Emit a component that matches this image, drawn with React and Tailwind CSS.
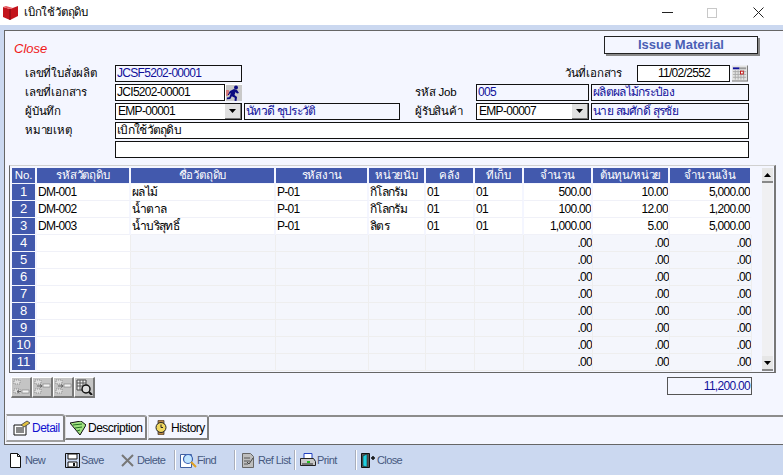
import React from "react";

const Label = ({ w, children }) => (
  <div className={`${w} text-[11.5px] leading-[17px] text-black shrink-0 tracking-[-0.2px]`}>{children}</div>
);

const Field = ({ w, blue, center, children }) => (
  <div className={`${w} h-[17px] shrink-0 border border-[#111] overflow-hidden whitespace-nowrap pl-[1px] text-[12px] leading-[15px] tracking-[-0.7px] ${blue ? "bg-[#f4f6ff] text-[#10109a]" : "bg-white text-black"} ${center ? "text-center" : ""}`}>
    {children}
  </div>
);

const Combo = ({ w, children }) => (
  <div className={`${w} h-[17px] shrink-0 border border-[#111] bg-white flex items-center text-[12px] leading-[15px] tracking-[-0.7px] text-black pl-[2px]`}>
    <span className="flex-1 overflow-hidden whitespace-nowrap">{children}</span>
    <span className="w-[16px] h-[15px] bg-[#e0e0e0] border-r border-b border-[#777] flex items-center justify-center">
      <svg width="7" height="4" viewBox="0 0 7 4"><path d="M0 0h7L3.5 4z" fill="#000" /></svg>
    </span>
  </div>
);

const Runner = () => (
  <svg width="17" height="17" viewBox="0 0 17 17">
    <rect width="17" height="17" fill="#c9c9c9" />
    <path d="M0 0h17v1H1v16H0z" fill="#fff" />
    <circle cx="11" cy="3.5" r="2" fill="#0b0b80" />
    <path d="M5 7l4-2 3 1 2 3-2 .5-1.500-1.500-1 3 2.500 2-.5 4-2-.2.3-3-3-1.500-1.500 2.700-3.500.2.3-1.700 2.200-.3 1.500-4-1 .4-1 1.700-1.200-.6z" fill="#0b0b80" />
    <path d="M1 7h3M1 9h3M1 11h2" stroke="#e03030" strokeWidth="1" />
  </svg>
);

const Calendar = () => (
  <svg width="16" height="17" viewBox="0 0 17 17" className="shrink-0">
    <rect width="17" height="17" fill="#e4e4e4" />
    <path d="M16 0h1v17H0v-1h16z" fill="#777" />
    <rect x="1" y="2" width="7" height="2" fill="#10109a" />
    <rect x="8" y="2" width="7" height="2" fill="#999" />
    <path d="M1 6.500h14M1 9.500h14M1 12.500h14M3.500 5v10M6.500 5v10M9.500 5v10M12.500 5v10" stroke="#aaa" strokeWidth="1" />
    <rect x="9" y="6" width="3" height="3" fill="#fff" stroke="#c01010" strokeWidth="1" />
  </svg>
);

const widths = ["w-[25px]", "w-[94px]", "w-[145px]", "w-[93px]", "w-[57px]", "w-[49px]", "w-[49px]", "w-[69px]", "w-[77px]", "w-[82px]"];
const heads = ["No.", "รหัสวัตถุดิบ", "ชื่อวัตถุดิบ", "รหัสงาน", "หน่วยนับ", "คลัง", "ที่เก็บ", "จำนวน", "ต้นทุน/หน่วย", "จำนวนเงิน"];
const data = [
  ["DM-001", "ผลไม้", "P-01", "กิโลกรัม", "01", "01", "500.00", "10.00", "5,000.00"],
  ["DM-002", "น้ำตาล", "P-01", "กิโลกรัม", "01", "01", "100.00", "12.00", "1,200.00"],
  ["DM-003", "น้ำบริสุทธิ์", "P-01", "ลิตร", "01", "01", "1,000.00", "5.00", "5,000.00"],
];

const Row = ({ n }) => {
  const d = data[n - 1];
  return (
    <div className="flex h-[17px]">
      <div className={`${widths[0]} shrink-0 border-r-2 border-b border-[#f4f6ff] bg-[#4259ad] text-white text-center text-[13px] leading-[15px]`}>{n}</div>
      {widths.slice(1).map((w, i) => {
        const isNum = i >= 6;
        const white = d || i === 0;
        const text = d ? d[i] : isNum ? ".00" : "";
        return (
          <div
            key={i}
            className={`${w} shrink-0 overflow-hidden whitespace-nowrap border-b text-[12px] leading-[16px] tracking-[-0.7px] text-black ${white ? "bg-white border-[#f0f1f8]" : "bg-[#f4f6fc] border-[#eeeeee]"} ${d ? "border-r-2 border-r-[#f4f6ff]" : "border-r border-r-[#eeeeee]"} ${isNum ? "text-right" : "text-left pl-[1px]"}`}
          >
            {text}
          </div>
        );
      })}
    </div>
  );
};

const GridBtn = ({ kind }) => (
  <div className="w-[21px] h-[21px] bg-[#c4c4c4] border-t border-l border-t-white border-l-white border-r-2 border-b-2 border-r-[#777] border-b-[#777] flex items-center justify-center">
    {kind === 3 ? (
      <svg width="17" height="16" viewBox="0 0 17 16">
        <path d="M1 1h9v10H1z" fill="#eee" stroke="#444" />
        <path d="M1 4h9M1 7h9M4 1v10M7 1v10" stroke="#555" />
        <circle cx="10" cy="10" r="4" fill="#ddd" stroke="#111" strokeWidth="1.500" />
        <path d="M13 13l3 3" stroke="#111" strokeWidth="2" />
      </svg>
    ) : (
      <svg width="17" height="16" viewBox="0 0 17 16">
        <path d="M1 1h6v4H1zM1 10h6v4H1z" fill="#dedede" stroke="#8f8f8f" strokeDasharray="1 1" />
        <rect x="9" y={kind === 0 ? 11 : 5} width="7" height="3" fill="#f2f2f2" stroke="#777" strokeWidth="0.600" />
        <path d={kind === 0 ? "M4 12.500h4M6 11l-2 1.500 2 1.500" : "M3 7h5M6 5.500l2 1.500-2 1.500"} stroke="#666" fill="none" />
      </svg>
    )}
  </div>
);

const Tab = ({ active, icon, label, w }) => (
  <div className={`${w} ${active ? "h-[28px] text-[#1010d0] border-b-2 border-b-[#a0a0a0] pl-[6px]" : "h-[25px] text-black mt-[1px] border-b-2 border-b-[#808080] pl-[4px]"} shrink-0 border-t-2 border-l border-r-2 border-t-[#999] border-l-[#ddd] border-r-[#808080] rounded-tr-[3px] flex items-center gap-[2px] text-[12px] tracking-[-0.5px] bg-[#f4f6ff]`}>
    {icon}
    <span className="whitespace-nowrap">{label}</span>
  </div>
);

const Sep = () => <div className="w-[2px] h-[20px] bg-[#a9aebb] border-r border-white shrink-0" />;

const Tool = ({ w, icon, label, gap = "gap-[1px]" }) => (
  <div className={`${w} shrink-0 flex items-center ${gap} text-[11px] text-[#46587f] tracking-[-0.6px] whitespace-nowrap`}>
    {icon}
    <span>{label}</span>
  </div>
);

export default function App() {
  return (
    <div className="w-[783px] h-[475px] overflow-hidden flex flex-col bg-[#cbd8f0] font-[Liberation_Sans,sans-serif]">
      <div className="h-[25px] bg-white flex items-center shrink-0">
        <svg width="16" height="14" viewBox="0 0 16 14" className="ml-[3px]">
          <path d="M0 1l7 2 8-3v10l-8 4-7-3z" fill="#c3141c" />
          <path d="M7 3v11" stroke="#7a0a10" />
          <path d="M0 1l7 2 3-1-7-2z" fill="#e8565c" />
        </svg>
        <span className="ml-[5px] text-[11.5px] text-black tracking-[-0.2px]">เบิกใช้วัตถุดิบ</span>
        <div className="ml-auto flex items-center mr-[19px]">
          <svg width="11" height="11" viewBox="0 0 11 11"><path d="M0 5.500h11" stroke="#222" /></svg>
          <svg width="10" height="10" viewBox="0 0 10 10" className="ml-[34px]"><rect x="0.500" y="0.500" width="9" height="9" fill="none" stroke="#c8c8c8" /></svg>
          <svg width="11" height="11" viewBox="0 0 11 11" className="ml-[36px]"><path d="M0.500 0.500l10 10M10.500 0.500l-10 10" stroke="#222" /></svg>
        </div>
      </div>

      <div className="flex-1 min-h-0 pl-[4px] pt-[5px]">
        <div className="h-[415px] border-l border-t border-b border-[#666] bg-[#f4f6ff] flex flex-col">
          <div className="h-[24px] mt-[5px] flex items-start shrink-0">
            <div className="ml-[9px] mt-[5px] text-[13px] italic text-[#f01818] leading-[16px]">Close</div>
            <div className="ml-auto mr-[25px] w-[154px] h-[18px] border border-[#222] shadow-[2px_2px_0_#888] bg-[#f4f6ff] text-center text-[13px] leading-[16px] font-bold text-[#4b5fb5]">Issue Material</div>
          </div>

          <div className="flex flex-col gap-[2px] mt-[5px] shrink-0">
            <div className="flex items-center pl-[20px]">
              <Label w="w-[90px]">เลขที่ใบสั่งผลิต</Label>
              <Field w="w-[127px]" blue>JCSF5202-00001</Field>
              <div className="w-[380px] shrink-0 text-right text-[11.5px] tracking-[-0.2px]">วันที่เอกสาร</div>
              <div className="w-[15px] shrink-0" />
              <Field w="w-[93px]" center>11/02/2552</Field>
              <div className="ml-[2px]"><Calendar /></div>
            </div>
            <div className="flex items-center pl-[20px]">
              <Label w="w-[90px]">เลขที่เอกสาร</Label>
              <Field w="w-[110px]">JCI5202-00001</Field>
              <div className="w-[17px] shrink-0"><Runner /></div>
              <div className="w-[173px] shrink-0" />
              <Label w="w-[61px]">รหัส Job</Label>
              <Field w="w-[113px]" blue>005</Field>
              <div className="w-[2px] shrink-0" />
              <Field w="w-[158px]" blue>ผลิตผลไม้กระป๋อง</Field>
            </div>
            <div className="flex items-center pl-[20px]">
              <Label w="w-[90px]">ผู้บันทึก</Label>
              <Combo w="w-[127px]">EMP-00001</Combo>
              <div className="w-[2px] shrink-0" />
              <Field w="w-[156px]" blue>นัทวดี ชุประวัติ</Field>
              <div className="w-[15px] shrink-0" />
              <Label w="w-[61px]">ผู้รับสินค้า</Label>
              <Combo w="w-[113px]">EMP-00007</Combo>
              <div className="w-[2px] shrink-0" />
              <Field w="w-[158px]" blue>นาย สมศักดิ์ สุรชัย</Field>
            </div>
            <div className="flex items-center pl-[20px]">
              <Label w="w-[90px]">หมายเหตุ</Label>
              <Field w="w-[634px]">เบิกใช้วัตถุดิบ</Field>
            </div>
            <div className="flex items-center pl-[110px]">
              <Field w="w-[634px]"></Field>
            </div>
          </div>

          <div className="ml-[4px] mt-[7px] w-[767px] h-[208px] shrink-0 border-l border-r-2 border-t border-b border-l-[#666] border-r-[#777] border-t-[#d0d0d0] border-b-[#666] flex pt-[2px] pl-[2px]">
            <div className="w-[740px] shrink-0 flex flex-col">
              <div className="flex h-[16px] shrink-0">
                {heads.map((h, i) => (
                  <div key={i} className={`${widths[i]} shrink-0 h-[15px] border-r-2 border-[#f4f6ff] bg-[#4259ad] text-white text-center text-[11.5px] leading-[15px] tracking-[-0.2px] whitespace-nowrap overflow-hidden`}>{h}</div>
                ))}
              </div>
              {Array.from({ length: 11 }, (_, i) => <Row key={i} n={i + 1} />)}
            </div>
            <div className="ml-[10px] w-[11px] shrink-0 h-[203px] flex flex-col justify-between bg-[#f0f0f2]">
              <div className="h-[15px] bg-[#e6e6e6] border-b-2 border-b-[#888] flex items-center justify-center">
                <svg width="7" height="4" viewBox="0 0 7 4"><path d="M0 4h7L3.500 0z" fill="#000" /></svg>
              </div>
              <div className="h-[15px] bg-[#e6e6e6] border-b-2 border-b-[#888] flex items-center justify-center">
                <svg width="7" height="4" viewBox="0 0 7 4"><path d="M0 0h7L3.500 4z" fill="#000" /></svg>
              </div>
            </div>
          </div>

          <div className="mt-[4px] flex items-start shrink-0">
            <div className="ml-[6px] flex">
              <GridBtn kind={0} /><GridBtn kind={1} /><GridBtn kind={1} /><GridBtn kind={3} />
            </div>
            <div className="ml-[572px] w-[85px] h-[18px] border border-[#555] text-right pr-[1px] text-[12px] leading-[16px] tracking-[-0.7px] text-[#10109a]">11,200.00</div>
          </div>

          <div className="flex-1" />
          <div className="flex items-start h-[30px] shrink-0 pl-[1px] text-black">
            <Tab active w="w-[59px]" label="Detail" icon={
              <svg width="17" height="16" viewBox="0 0 17 16" className="shrink-0">
                <path d="M1 5h12v10H1z" fill="#fff" stroke="#111" />
                <path d="M3 8h8M3 10h8M3 12h8" stroke="#111" />
                <path d="M8 5l6-4 3 2-6 4z" fill="#e0c040" stroke="#555" />
              </svg>
            } />
            <Tab w="w-[82px]" label="Description" icon={
              <svg width="16" height="14" viewBox="0 0 16 14" className="shrink-0">
                <path d="M0 2l11-2 5 4-6 10z" fill="#a0e080" stroke="#111" />
                <path d="M3 4l9-1M5 7l7-1M7 10l3-1" stroke="#207020" />
              </svg>
            } />
            <div className="w-[1px] shrink-0" />
            <Tab w="w-[61px]" label="History" icon={
              <svg width="13" height="15" viewBox="0 0 13 15" className="shrink-0 mr-[1px] ml-[2px]">
                <rect x="3" y="0" width="6" height="15" rx="1" fill="#b8864a" stroke="#222" strokeWidth="0.700" />
                <circle cx="6" cy="7.500" r="5" fill="#f0d860" stroke="#222" />
                <path d="M6 4.500v3h2" stroke="#222" fill="none" />
              </svg>
            } />
            <div className="flex-1 border-t-2 border-[#8c8c8c] mt-[1px]" />
          </div>
        </div>
      </div>

      <div className="h-[30px] shrink-0 flex items-center pl-[10px]">
        <Tool w="w-[55px]" label="New" gap="gap-[4px]" icon={
          <svg width="11" height="15" viewBox="0 0 11 15"><path d="M.5.500h7l3 3v11H.5z" fill="#fff" stroke="#111" /><path d="M7.500.500v3h3" fill="none" stroke="#111" /></svg>
        } />
        <Tool w="w-[56px]" label="Save" icon={
          <svg width="15" height="15" viewBox="0 0 15 15"><path d="M.5.500h14v14H.5z" fill="#cbd8f0" stroke="#111" /><path d="M3 1h9v5H3zM3 9h9v5H3z" fill="#fff" stroke="#111" /><path d="M8 10h2v3H8z" fill="#111" /></svg>
        } />
        <Tool w="w-[53px]" label="Delete" gap="gap-[3px]" icon={
          <svg width="13" height="13" viewBox="0 0 13 13"><path d="M1 1l11 11M12 1L1 12" stroke="#777" strokeWidth="2" /></svg>
        } />
        <Sep />
        <div className="w-[4px] shrink-0" />
        <Tool w="w-[54px]" label="Find" gap="gap-[0px]" icon={
          <svg width="17" height="15" viewBox="0 0 17 15"><path d="M.5 1.500h11v13H.5z" fill="#fff" stroke="#4060a0" /><circle cx="8" cy="6" r="4.500" fill="#bfe4ff" stroke="#3a5fb0" strokeWidth="1.200" /><path d="M11 9l5 5" stroke="#e0a020" strokeWidth="2" /></svg>
        } />
        <Sep />
        <div className="w-[6px] shrink-0" />
        <Tool w="w-[52px]" label="Ref List" gap="gap-[4px]" icon={
          <svg width="12" height="15" viewBox="0 0 12 15"><path d="M.5.500h8l3 3v11H.5z" fill="#bdbdbd" stroke="#666" /><path d="M2 5h6M2 8h6M2 11h4" stroke="#555" /><path d="M5 9l2 2 4-6" stroke="#444" fill="none" /></svg>
        } />
        <Sep />
        <div className="w-[4px] shrink-0" />
        <Tool w="w-[55px]" label="Print" gap="gap-[1px]" icon={
          <svg width="16" height="14" viewBox="0 0 16 14"><path d="M4 .500h8v5H4z" fill="#fff" stroke="#2040c0" /><path d="M.5 5.500h13l2 3v4H.5z" fill="#c8c8c8" stroke="#222" /><path d="M7 8h3v2H7z" fill="#20c020" /><path d="M2 11h11" stroke="#222" /></svg>
        } />
        <Sep />
        <div className="w-[4px] shrink-0" />
        <Tool w="w-[50px]" label="Close" gap="gap-[1px]" icon={
          <svg width="15" height="15" viewBox="0 0 15 15"><path d="M.5.500h8v14H.5z" fill="#555" stroke="#111" /><path d="M2 3l4-2v13l-4-1z" fill="#20d0e0" stroke="#111" strokeWidth="0.500" /><path d="M10 5h4M12 3v4" stroke="#111" strokeWidth="1.500" /></svg>
        } />
      </div>
    </div>
  );
}
